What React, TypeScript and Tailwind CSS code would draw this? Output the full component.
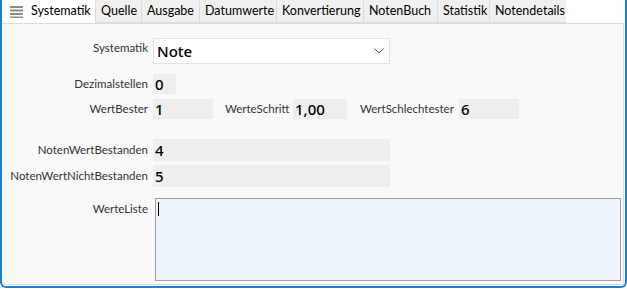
const tabs = [
  { name: 'Quelle', w: 'w-[46px]' },
  { name: 'Ausgabe', w: 'w-[58px]' },
  { name: 'Datumwerte', w: 'w-[77px]' },
  { name: 'Konvertierung', w: 'w-[87px]' },
  { name: 'NotenBuch', w: 'w-[74px]' },
  { name: 'Statistik', w: 'w-[52px]' },
  { name: 'Notendetails', w: 'w-[77px]' },
];

const uiFont = { fontFamily: 'Lato, "Noto Sans", sans-serif' };
const valueFont = { fontFamily: '"Noto Sans", sans-serif' };

function Field({ value, className }: { value: string; className: string }) {
  return (
    <div
      className={`flex items-center bg-[#eeeeee] pl-[2px] text-[15px] font-medium leading-none text-black ${className}`}
      style={valueFont}
    >
      {value}
    </div>
  );
}

function Label({ children, className = '' }: { children: string; className?: string }) {
  return <div className={`text-right text-[11.5px] text-[#333333] ${className}`}>{children}</div>;
}

export default function App() {
  return (
    <div className="h-[289px] w-[627px] overflow-hidden bg-white" style={uiFont}>
      <div className="flex h-[288px] w-[627px] flex-col rounded-b-[6px] border-x-2 border-b-2 border-[#1a7fd8] bg-white">
        {/* tab strip */}
        <div className="flex h-[23px] shrink-0 items-stretch">
          <div className="flex w-[93px] items-center pl-[8px]">
            <svg width="13" height="12" viewBox="0 0 13 12" className="mr-[8px]">
              <rect x="0" y="0" width="13" height="2" fill="#8a8a8a" />
              <rect x="0" y="3.5" width="13" height="2" fill="#8a8a8a" />
              <rect x="0" y="7" width="13" height="2" fill="#8a8a8a" />
              <rect x="0" y="10.5" width="13" height="1.5" fill="#8a8a8a" />
            </svg>
            <span className="text-[12.5px] text-black">Systematik</span>
          </div>
          {tabs.map((tab) => (
            <div
              key={tab.name}
              className={`flex items-center border-b border-l border-[#dcdcdc] bg-[#f0f0f0] pl-[5px] text-[12.5px] text-black ${tab.w}`}
            >
              {tab.name}
            </div>
          ))}
          <div className="flex-1" />
        </div>

        {/* panel */}
        <div className="mb-[1px] mr-[1px] flex-1 rounded-bl-[4px] border-y border-r border-[#dcdcdc] bg-[#f9f9f9]">
          <div className="flex flex-col pt-[14px]">
            <div className="flex items-center">
              <Label className="-mt-[6px] w-[146px]">Systematik</Label>
              <div className="ml-[5px] flex h-[26px] w-[237px] items-center justify-between border border-[#e3e3e3] bg-white pl-[3px] pr-[5px]">
                <span className="text-[15px] font-medium text-black" style={valueFont}>
                  Note
                </span>
                <svg width="10" height="6" viewBox="0 0 10 6">
                  <path d="M0.5 0.5 L5 5 L9.5 0.5" fill="none" stroke="#555" strokeWidth="1" />
                </svg>
              </div>
            </div>

            <div className="mt-[10px] flex items-center">
              <Label className="w-[146px]">Dezimalstellen</Label>
              <Field value="0" className="ml-[5px] h-[20px] w-[23px]" />
            </div>

            <div className="mt-[5px] flex items-center">
              <Label className="w-[146px]">WertBester</Label>
              <Field value="1" className="ml-[5px] h-[20px] w-[60px]" />
              <Label className="ml-[12px] w-[63px]">WerteSchritt</Label>
              <Field value="1,00" className="ml-[5px] h-[20px] w-[54px]" />
              <Label className="ml-[13px] w-[92px] text-left">WertSchlechtester</Label>
              <Field value="6" className="ml-[7px] h-[20px] w-[60px]" />
            </div>

            <div className="mt-[20px] flex items-center">
              <Label className="w-[146px]">NotenWertBestanden</Label>
              <Field value="4" className="ml-[5px] h-[22px] w-[237px]" />
            </div>

            <div className="mt-[4px] flex items-center">
              <Label className="w-[146px]">NotenWertNichtBestanden</Label>
              <Field value="5" className="ml-[5px] h-[22px] w-[237px]" />
            </div>

            <div className="mt-[11px] flex items-start">
              <Label className="mt-[2px] w-[146px]">WerteListe</Label>
              <div className="ml-[7px] h-[83px] w-[466px] border border-[#a0a0a0] bg-[#edf4fc] pl-[2px] pt-[3px]">
                <div className="h-[14px] w-px bg-black" />
              </div>
            </div>
          </div>
        </div>
      </div>
    </div>
  );
}
